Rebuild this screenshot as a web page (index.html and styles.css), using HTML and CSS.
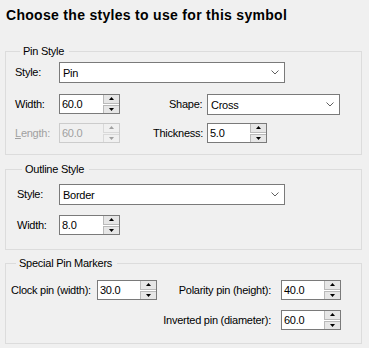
FILE: index.html
```html
<!DOCTYPE html>
<html lang="en">
<head>
    <meta charset="UTF-8">
    <meta name="viewport" content="width=device-width, initial-scale=1.0">
    <title>Symbol Styles</title>
    <link rel="stylesheet" href="styles.css">
</head>
<body>
    <!-- Header -->
    <h1 class="title">Choose the styles to use for this symbol</h1>

    <!-- Pin Style -->
    <fieldset class="group group-pin">
        <legend>Pin Style</legend>
        <div class="row">
            <label class="lbl lbl-main">Style:</label>
            <div class="combo combo-wide">
                <span>Pin</span>
                <svg class="chev" width="8" height="5" viewBox="0 0 8 5"><polyline points="0.5,0.5 4,4 7.5,0.5" /></svg>
            </div>
        </div>
        <div class="row row-2">
            <label class="lbl lbl-main">Width:</label>
            <div class="spin spin-main">
                <span class="spin-val">60.0</span>
                <div class="spin-btns">
                    <div class="spin-btn"><svg width="5" height="3" viewBox="0 0 5 3"><polygon points="2.5,0 5,3 0,3" /></svg></div>
                    <div class="spin-btn"><svg width="5" height="3" viewBox="0 0 5 3"><polygon points="0,0 5,0 2.5,3" /></svg></div>
                </div>
            </div>
            <label class="lbl lbl-shape">Shape:</label>
            <div class="combo combo-shape">
                <span>Cross</span>
                <svg class="chev" width="8" height="5" viewBox="0 0 8 5"><polyline points="0.5,0.5 4,4 7.5,0.5" /></svg>
            </div>
        </div>
        <div class="row row-3">
            <label class="lbl lbl-main disabled"><u>L</u>ength:</label>
            <div class="spin spin-main disabled">
                <span class="spin-val">60.0</span>
                <div class="spin-btns">
                    <div class="spin-btn"><svg width="5" height="3" viewBox="0 0 5 3"><polygon points="2.5,0 5,3 0,3" /></svg></div>
                    <div class="spin-btn"><svg width="5" height="3" viewBox="0 0 5 3"><polygon points="0,0 5,0 2.5,3" /></svg></div>
                </div>
            </div>
            <label class="lbl lbl-thick">Thickness:</label>
            <div class="spin">
                <span class="spin-val">5.0</span>
                <div class="spin-btns">
                    <div class="spin-btn"><svg width="5" height="3" viewBox="0 0 5 3"><polygon points="2.5,0 5,3 0,3" /></svg></div>
                    <div class="spin-btn"><svg width="5" height="3" viewBox="0 0 5 3"><polygon points="0,0 5,0 2.5,3" /></svg></div>
                </div>
            </div>
        </div>
    </fieldset>

    <!-- Outline Style -->
    <fieldset class="group group-outline">
        <legend>Outline Style</legend>
        <div class="row">
            <label class="lbl lbl-outline">Style:</label>
            <div class="combo combo-wide">
                <span>Border</span>
                <svg class="chev" width="8" height="5" viewBox="0 0 8 5"><polyline points="0.5,0.5 4,4 7.5,0.5" /></svg>
            </div>
        </div>
        <div class="row row-outline-2">
            <label class="lbl lbl-outline">Width:</label>
            <div class="spin spin-main">
                <span class="spin-val">8.0</span>
                <div class="spin-btns">
                    <div class="spin-btn"><svg width="5" height="3" viewBox="0 0 5 3"><polygon points="2.5,0 5,3 0,3" /></svg></div>
                    <div class="spin-btn"><svg width="5" height="3" viewBox="0 0 5 3"><polygon points="0,0 5,0 2.5,3" /></svg></div>
                </div>
            </div>
        </div>
    </fieldset>

    <!-- Special Pin Markers -->
    <fieldset class="group group-special">
        <legend>Special Pin Markers</legend>
        <div class="marker-grid">
            <label class="lbl">Clock pin (width):</label>
            <div class="spin">
                <span class="spin-val">30.0</span>
                <div class="spin-btns">
                    <div class="spin-btn"><svg width="5" height="3" viewBox="0 0 5 3"><polygon points="2.5,0 5,3 0,3" /></svg></div>
                    <div class="spin-btn"><svg width="5" height="3" viewBox="0 0 5 3"><polygon points="0,0 5,0 2.5,3" /></svg></div>
                </div>
            </div>
            <label class="lbl lbl-right">Polarity pin (height):</label>
            <div class="spin">
                <span class="spin-val">40.0</span>
                <div class="spin-btns">
                    <div class="spin-btn"><svg width="5" height="3" viewBox="0 0 5 3"><polygon points="2.5,0 5,3 0,3" /></svg></div>
                    <div class="spin-btn"><svg width="5" height="3" viewBox="0 0 5 3"><polygon points="0,0 5,0 2.5,3" /></svg></div>
                </div>
            </div>
            <label class="lbl lbl-right lbl-inverted">Inverted pin (diameter):</label>
            <div class="spin">
                <span class="spin-val">60.0</span>
                <div class="spin-btns">
                    <div class="spin-btn"><svg width="5" height="3" viewBox="0 0 5 3"><polygon points="2.5,0 5,3 0,3" /></svg></div>
                    <div class="spin-btn"><svg width="5" height="3" viewBox="0 0 5 3"><polygon points="0,0 5,0 2.5,3" /></svg></div>
                </div>
            </div>
        </div>
    </fieldset>
</body>
</html>
```

FILE: styles.css
```css
/* General Styles */
body {
    font-family: "Liberation Sans", Arial, sans-serif;
    font-size: 11px;
    letter-spacing: -0.25px;
    margin: 0;
    padding: 0;
    background-color: #f0f0f0;
    color: #000;
    overflow: hidden;
}

/* Header */
.title {
    box-sizing: border-box;
    height: 45px;
    margin: 0;
    padding: 7px 0 0 6px;
    font-size: 14px;
    line-height: 16px;
    font-weight: bold;
    letter-spacing: 0.3px;
}

/* Group boxes */
.group {
    box-sizing: border-box;
    width: 357px;
    margin: 0 0 0 5px;
    padding: 0;
    border: 1px solid #dcdcdc;
    min-inline-size: 0;
}

.group legend {
    margin-left: 5px;
    padding: 0 5px 0 3px;
    line-height: 13px;
}

.group-pin {
    padding: 4px 0 11px 9px;
}

.group-outline {
    margin-top: 8px;
    padding: 8px 0 14px 11px;
}

.group-special {
    margin-top: 7px;
    padding: 10px 0 13px 5px;
}

/* Rows */
.row {
    display: flex;
    align-items: flex-start;
}

.row-2 {
    margin-top: 11px;
}

.row-3 {
    margin-top: 8px;
}

.row-outline-2 {
    margin-top: 10px;
}

/* Labels */
.lbl {
    display: block;
    padding-top: 4px;
    line-height: 13px;
    white-space: nowrap;
}

.lbl-main {
    width: 44px;
}

.lbl-outline {
    width: 42px;
}

.lbl-shape {
    width: 38px;
    margin-left: 49px;
}

.lbl-thick {
    width: 54px;
    margin-left: 33px;
}

.lbl.disabled {
    color: #a0a0a0;
}

.lbl-right {
    text-align: right;
    padding-right: 10px;
}

/* Combo boxes */
.combo {
    box-sizing: border-box;
    height: 21px;
    display: flex;
    align-items: center;
    justify-content: space-between;
    padding: 0 5px 0 3px;
    background-color: #fff;
    border: 1px solid #7a7a7a;
}

.combo-wide {
    width: 226px;
}

.combo-shape {
    width: 133px;
}

.chev polyline {
    fill: none;
    stroke: #606060;
    stroke-width: 1;
}

/* Spin boxes */
.spin {
    box-sizing: border-box;
    width: 60px;
    height: 20px;
    display: flex;
    background-color: #fff;
    border: 1px solid #7a7a7a;
}

.spin-main {
    width: 61px;
}

.spin-val {
    flex: 1;
    padding-left: 2px;
    line-height: 18px;
}

.spin-btns {
    width: 16px;
    display: flex;
    flex-direction: column;
    gap: 1px;
    padding: 0;
    background-color: #fff;
}

.spin-btn {
    flex: 1;
    display: flex;
    align-items: center;
    justify-content: center;
    background-color: #e6e6e6;
    border: 1px solid #b9b9b9;
    border-right: none;
}

.spin-btn:first-child {
    border-top: none;
}

.spin-btn:last-child {
    border-bottom: none;
}

.spin-btn polygon {
    fill: #000;
}

.spin.disabled {
    background-color: #f0f0f0;
    border-color: #cccccc;
    color: #a0a0a0;
}

.spin.disabled .spin-btns {
    background-color: #f0f0f0;
}

.spin.disabled .spin-btn {
    background-color: #f0f0f0;
    border-color: #d9d9d9;
}

.spin.disabled .spin-btn polygon {
    fill: #a0a0a0;
}

/* Special pin markers */
.marker-grid {
    display: grid;
    grid-template-columns: 86px 60px 124px 60px;
    row-gap: 10px;
}

.lbl-inverted {
    grid-column: 3;
}
```
